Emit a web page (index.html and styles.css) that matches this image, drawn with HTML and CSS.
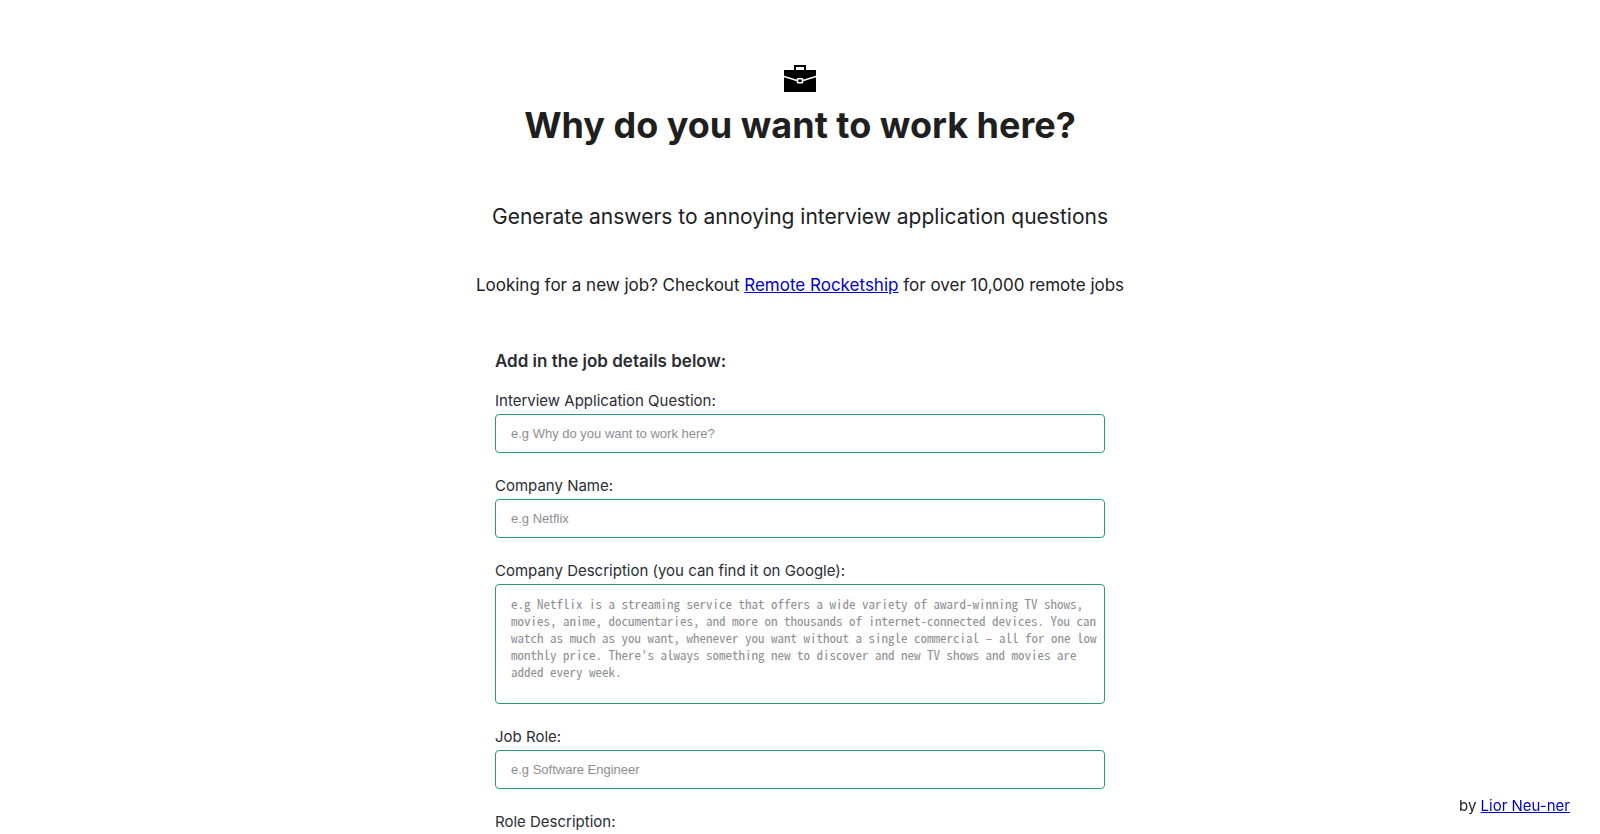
FILE: index.html
```html
<!DOCTYPE html>
<html lang="en">
<head>
<meta charset="utf-8">
<meta name="viewport" content="width=device-width, initial-scale=1">
<title>Why do you want to work here?</title>
<link rel="stylesheet" href="styles.css">
</head>
<body>
<main class="page">
  <header class="hero">
    <svg class="logo" viewBox="0 0 32 28" aria-hidden="true">
      <path fill-rule="evenodd" d="M10 0h12v5h10v22H0V5h10zM12 2v3h8V2z"/>
      <path d="M0 11.500l13 4M32 11.500l-13 4" fill="none" stroke="#fff" stroke-width="1.600"/>
      <rect x="13.500" y="13.800" width="5" height="4" rx="0.500" fill="#000" stroke="#fff" stroke-width="1.600"/>
    </svg>
    <h1 class="title">Why do you want to work here?</h1>
    <p class="subtitle">Generate answers to annoying interview application questions</p>
    <p class="promo">Looking for a new job? Checkout <a href="#">Remote Rocketship</a> for over 10,000 remote jobs</p>
  </header>
  <form class="form">
    <h2 class="form-title">Add in the job details below:</h2>
    <div class="field">
      <label for="question">Interview Application Question:</label>
      <input id="question" type="text" placeholder="e.g Why do you want to work here?">
    </div>
    <div class="field">
      <label for="company">Company Name:</label>
      <input id="company" type="text" placeholder="e.g Netflix">
    </div>
    <div class="field">
      <label for="company-desc">Company Description (you can find it on Google):</label>
      <textarea id="company-desc" placeholder="e.g Netflix is a streaming service that offers a wide variety of award-winning TV shows, movies, anime, documentaries, and more on thousands of internet-connected devices. You can watch as much as you want, whenever you want without a single commercial – all for one low monthly price. There's always something new to discover and new TV shows and movies are added every week."></textarea>
    </div>
    <div class="field">
      <label for="role">Job Role:</label>
      <input id="role" type="text" placeholder="e.g Software Engineer">
    </div>
    <div class="field">
      <label for="role-desc">Role Description:</label>
      <textarea id="role-desc"></textarea>
    </div>
  </form>
</main>
<footer class="credit">by <a href="#">Lior Neu-ner</a></footer>
</body>
</html>
```
FILE: styles.css
```css
* { box-sizing: border-box; }

html { scrollbar-width: none; }

body {
  margin: 0;
  background: #fff;
  color: #202124;
  font-family: Inter, "Liberation Sans", sans-serif;
  font-size: 15px;
  line-height: 20px;
}

a { color: #0000cd; }

.page {
  display: flex;
  flex-direction: column;
  align-items: center;
  padding: 65px 16px 48px;
}

.hero {
  display: flex;
  flex-direction: column;
  align-items: center;
  text-align: center;
}

.logo { width: 32px; height: 28px; }

.title {
  margin: 8px 0 0;
  color: #1f1f1f;
  font-size: 36px;
  font-weight: 700;
  line-height: 48px;
}

.subtitle {
  margin: 52px 0 0;
  font-size: 21px;
  line-height: 32px;
}

.promo {
  margin: 40px 0 0;
  font-size: 17px;
  line-height: 24px;
}

.form {
  width: 100%;
  max-width: 610px;
  margin-top: 52px;
  color: #2b2d33;
}

.form-title {
  margin: 0 0 18px;
  font-size: 17px;
  font-weight: 600;
  line-height: 24px;
}

.field {
  display: flex;
  flex-direction: column;
  gap: 3px;
  margin-bottom: 23px;
}

.field input,
.field textarea {
  width: 100%;
  border: 1px solid #2a9d78;
  border-radius: 4px;
  background: #fff;
  color: inherit;
}

.field input {
  height: 39px;
  padding: 0 15px;
  font: 13px "Liberation Sans", sans-serif;
}

.field textarea {
  height: 120px;
  padding: 10px 0 10px 15px;
  font: 13px/17px "Noto Sans Mono CJK KR", "Noto Sans Mono CJK SC", "Liberation Mono", monospace;
  resize: none;
}

.field ::placeholder { color: #8e8e92; opacity: 1; }

.credit {
  position: fixed;
  right: 30px;
  bottom: 18px;
}
```
